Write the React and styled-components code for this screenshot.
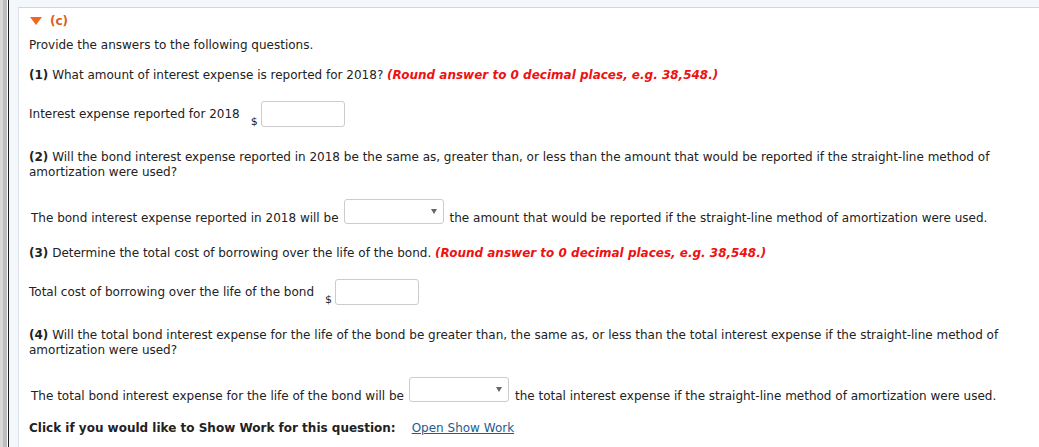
import styled, { createGlobalStyle } from "styled-components"

const GlobalStyle = createGlobalStyle`
  body {
    margin: 0;
    background: #f4f8fc;
    font-family: Verdana, "DejaVu Sans", sans-serif;
    font-size: 12px;
    color: #222;
  }
`

const Page = styled.div`
  display: flex;
  height: 447px;
  overflow: hidden;
`

const Rail = styled.div`
  width: 9px;
  flex-shrink: 0;
  background: linear-gradient(
    to right,
    #d8d8d8 0 3px,
    #bdbdbd 3px 7px,
    #ffffff 7px 8px,
    #1e1e1e 8px 9px
  );
`

const Backdrop = styled.div`
  flex: 1;
  padding: 7px 0 0 9px;
`

const Panel = styled.div`
  background: #fff;
  border-top: 1px solid #cfd6e0;
  border-left: 1px solid #dde3ea;
  height: 100%;
  padding: 5px 0 0 10px;
  width: 1100px;
`

const Header = styled.div`
  display: flex;
  align-items: center;
  gap: 8px;
  height: 15px;
  padding-left: 1px;
`

const Triangle = styled.span`
  width: 0;
  height: 0;
  border-left: 6px solid transparent;
  border-right: 6px solid transparent;
  border-top: 8px solid #f26522;
`

const PartLabel = styled.span`
  color: #d9601a;
  font-weight: bold;
`

const Text = styled.p`
  margin: ${(p) => p.$top}px 0 0;
  line-height: 15px;
`

const Bold = styled.b``

const Hint = styled.span`
  color: #ee1111;
  font-weight: bold;
  font-style: italic;
`

const InputRow = styled.div`
  display: flex;
  align-items: center;
  margin-top: ${(p) => p.$top}px;
  height: 26px;
`

const Label = styled.span`
  line-height: 15px;
`

const Dollar = styled.span`
  align-self: flex-end;
  margin: 0 3px 0 11px;
  font-size: 11px;
  line-height: 10px;
`

const AmountInput = styled.input`
  width: 84px;
  height: 26px;
  box-sizing: border-box;
  border: 1px solid #cccccc;
  border-radius: 3px;
  font: inherit;
  padding: 0 4px;
  outline: none;
`

const SelectRow = styled.div`
  display: flex;
  align-items: flex-end;
  margin-top: ${(p) => p.$top}px;
  padding-left: 2px;
`

const SelectText = styled.span`
  line-height: 15px;
  margin-bottom: -2px;
`

const Select = styled.div`
  position: relative;
  width: 100px;
  height: 25px;
  box-sizing: border-box;
  border: 1px solid #cccccc;
  border-radius: 3px;
  margin: 0 6px 0 5px;
  background: #fff;
`

const Caret = styled.span`
  position: absolute;
  right: 6px;
  top: 9px;
  width: 0;
  height: 0;
  border-left: 3px solid transparent;
  border-right: 3px solid transparent;
  border-top: 5px solid #666;
`

const WorkRow = styled.div`
  display: flex;
  gap: 16px;
  margin-top: ${(p) => p.$top}px;
  line-height: 15px;
`

const WorkLink = styled.a`
  color: #1d5c8e;
  text-decoration: underline;
  cursor: pointer;
`

export default function App() {
  return (
    <Page>
      <GlobalStyle />
      <Rail />
      <Backdrop>
        <Panel>
          <Header>
            <Triangle />
            <PartLabel>(c)</PartLabel>
          </Header>
          <Text $top={10}>Provide the answers to the following questions.</Text>
          <Text $top={15}>
            <Bold>(1)</Bold> What amount of interest expense is reported for 2018?{" "}
            <Hint>(Round answer to 0 decimal places, e.g. 38,548.)</Hint>
          </Text>
          <InputRow $top={18}>
            <Label>Interest expense reported for 2018</Label>
            <Dollar>$</Dollar>
            <AmountInput type="text" />
          </InputRow>
          <Text $top={23}>
            <Bold>(2)</Bold> Will the bond interest expense reported in 2018 be the same as, greater than, or less than the amount that would be reported if the straight-line method of
            <br />
            amortization were used?
          </Text>
          <SelectRow $top={19}>
            <SelectText>The bond interest expense reported in 2018 will be</SelectText>
            <Select>
              <Caret />
            </Select>
            <SelectText>the amount that would be reported if the straight-line method of amortization were used.</SelectText>
          </SelectRow>
          <Text $top={22}>
            <Bold>(3)</Bold> Determine the total cost of borrowing over the life of the bond.{" "}
            <Hint>(Round answer to 0 decimal places, e.g. 38,548.)</Hint>
          </Text>
          <InputRow $top={18}>
            <Label>Total cost of borrowing over the life of the bond</Label>
            <Dollar>$</Dollar>
            <AmountInput type="text" />
          </InputRow>
          <Text $top={23}>
            <Bold>(4)</Bold> Will the total bond interest expense for the life of the bond be greater than, the same as, or less than the total interest expense if the straight-line method of
            <br />
            amortization were used?
          </Text>
          <SelectRow $top={19}>
            <SelectText>The total bond interest expense for the life of the bond will be</SelectText>
            <Select>
              <Caret />
            </Select>
            <SelectText>the total interest expense if the straight-line method of amortization were used.</SelectText>
          </SelectRow>
          <WorkRow $top={19}>
            <Bold>Click if you would like to Show Work for this question:</Bold>
            <WorkLink>Open Show Work</WorkLink>
          </WorkRow>
        </Panel>
      </Backdrop>
    </Page>
  )
}
